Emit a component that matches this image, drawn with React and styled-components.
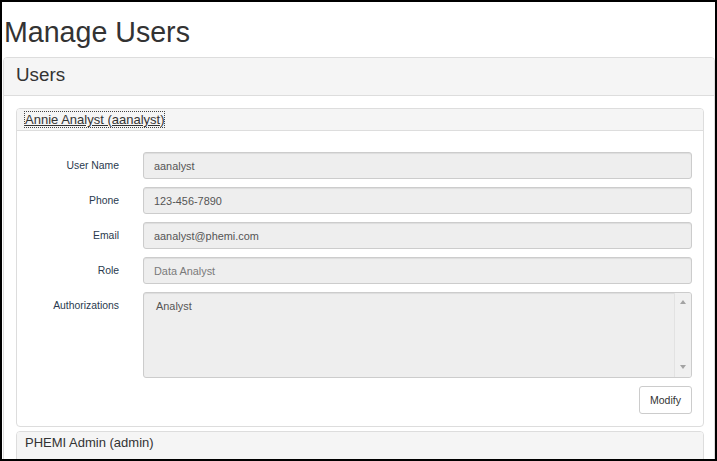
import React from 'react';
import styled, { createGlobalStyle } from 'styled-components';

const Global = createGlobalStyle`
  html, body { margin: 0; padding: 0; background: #fff; }
  body { font-family: "Liberation Sans", Arial, sans-serif; }
  * { box-sizing: border-box; }
`;

const Frame = styled.div`
  width: 717px;
  height: 461px;
  border: 2px solid #000;
  overflow: hidden;
  background: #fff;
  color: #333;
`;

const Title = styled.h1`
  margin: 14px 0 8px 2px;
  font-size: 28.6px;
  font-weight: normal;
  line-height: 33px;
  color: #333;
`;

const Panel = styled.section`
  margin-left: 1px;
  border: 1px solid #ddd;
  border-radius: 4px;
  background: #fff;
`;

const PanelHeader = styled.div`
  background: #f5f5f5;
  border-bottom: 1px solid #ddd;
  border-radius: 3px 3px 0 0;
  padding: 6px 12px 9px;
  font-size: 18.8px;
  line-height: 22px;
  color: #333;
`;

const PanelBody = styled.div`
  padding: 12px 10px 0 12px;
  display: flex;
  flex-direction: column;
  gap: 4px;
`;

const Card = styled.div`
  border: 1px solid #ddd;
  border-radius: 4px;
  background: #fff;
`;

const CardHeader = styled.div`
  background: #f5f5f5;
  border-bottom: ${(p) => (p.$open ? '1px solid #ddd' : 'none')};
  border-radius: 3px 3px 0 0;
  padding: 0 8px;
  height: ${(p) => (p.$open ? '22px' : '30px')};
  line-height: 21px;
  font-size: 13px;
  color: #333;
`;

const UserLink = styled.a`
  color: #333;
  text-decoration: ${(p) => (p.$active ? 'underline' : 'none')};
  outline: ${(p) => (p.$active ? '1px dotted #444' : 'none')};
  outline-offset: 0;
`;

const Form = styled.div`
  display: grid;
  grid-template-columns: 102px 1fr;
  column-gap: 24px;
  row-gap: 8px;
  padding: 21px 11px 12px 0;
`;

const Label = styled.div`
  font-size: 10.4px;
  line-height: 14px;
  text-align: right;
  color: #2a3a4e;
  align-self: ${(p) => (p.$top ? 'start' : 'center')};
  padding-top: ${(p) => (p.$top ? '7px' : '0')};
`;

const Field = styled.div`
  height: 27px;
  display: flex;
  align-items: center;
  padding: 0 10px;
  background: #eee;
  border: 1px solid #ccc;
  border-radius: 3px;
  box-shadow: inset 0 1px 1px rgba(0, 0, 0, 0.075);
  font-size: 10.9px;
  color: ${(p) => (p.$muted ? '#7a7a7a' : '#555')};
`;

const Area = styled.div`
  height: 86px;
  display: flex;
  background: #eee;
  border: 1px solid #ccc;
  border-radius: 3px;
  box-shadow: inset 0 1px 1px rgba(0, 0, 0, 0.075);
  overflow: hidden;
`;

const AreaText = styled.div`
  flex: 1;
  padding: 6px 12px;
  font-size: 10.9px;
  line-height: 14px;
  color: #555;
`;

const Scrollbar = styled.div`
  width: 17px;
  background: #f0f0f0;
  border-left: 1px solid #e2e2e2;
  display: flex;
  flex-direction: column;
  justify-content: space-between;
  align-items: center;
  padding: 7px 0 8px;
`;

const Arrow = styled.span`
  width: 0;
  height: 0;
  border-left: 3.5px solid transparent;
  border-right: 3.5px solid transparent;
  border-${(p) => (p.$down ? 'top' : 'bottom')}: 4px solid #a3a3a3;
`;

const Actions = styled.div`
  grid-column: 2;
  display: flex;
  justify-content: flex-end;
`;

const Button = styled.button`
  height: 28px;
  width: 53px;
  padding: 0;
  background: #fff;
  border: 1px solid #ccc;
  border-radius: 3px;
  font-family: "Liberation Sans", Arial, sans-serif;
  font-size: 10.5px;
  color: #333;
`;

const fields = [
  { label: 'User Name', value: 'aanalyst' },
  { label: 'Phone', value: '123-456-7890' },
  { label: 'Email', value: 'aanalyst@phemi.com' },
  { label: 'Role', value: 'Data Analyst', muted: true },
];

export default function App() {
  return (
    <>
      <Global />
      <Frame>
        <Title>Manage Users</Title>
        <Panel>
          <PanelHeader>Users</PanelHeader>
          <PanelBody>
            <Card>
              <CardHeader $open>
                <UserLink $active href="#">Annie Analyst (aanalyst)</UserLink>
              </CardHeader>
              <Form>
                {fields.map((f) => (
                  <React.Fragment key={f.label}>
                    <Label>{f.label}</Label>
                    <Field $muted={f.muted}>{f.value}</Field>
                  </React.Fragment>
                ))}
                <Label $top>Authorizations</Label>
                <Area>
                  <AreaText>Analyst</AreaText>
                  <Scrollbar>
                    <Arrow />
                    <Arrow $down />
                  </Scrollbar>
                </Area>
                <Actions>
                  <Button>Modify</Button>
                </Actions>
              </Form>
            </Card>
            <Card>
              <CardHeader>
                <UserLink href="#">PHEMI Admin (admin)</UserLink>
              </CardHeader>
            </Card>
          </PanelBody>
        </Panel>
      </Frame>
    </>
  );
}
